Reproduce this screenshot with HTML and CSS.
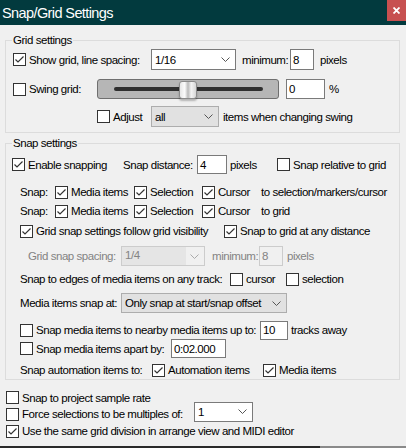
FILE: index.html
```html
<!DOCTYPE html>
<html lang="en">
<head>
    <meta charset="UTF-8">
    <title>Snap/Grid Settings</title>
    <link rel="stylesheet" href="styles.css">
</head>
<body>

<div class="titlebar">
    <div class="title">Snap/Grid Settings</div>
    <div class="close">
        <svg width="7" height="7" viewBox="0 0 7 7"><path d="M0.5 0.5 L6.5 6.5 M6.5 0.5 L0.5 6.5" stroke="#fff" stroke-width="1.8"/></svg>
    </div>
</div>

<div class="group grid-group">
    <div class="group-title">Grid settings</div>

    <div class="row row-show">
        <label class="cb w138"><span class="box"><svg width="11" height="11" viewBox="0 0 11 11"><polyline points="1.5,5.5 4,8 9.5,2.5" fill="none" stroke="#333" stroke-width="1.2"/></svg></span>Show grid, line spacing:</label>
        <div class="dd w85 h21"><span>1/16</span><svg width="9" height="5" viewBox="0 0 9 5"><polyline points="0.5,0.5 4.5,4.5 8.5,0.5" fill="none" stroke="#555"/></svg></div>
        <span class="txt ml6 w48">minimum:</span>
        <div class="edit w24 h21">8</div>
        <span class="txt ml6">pixels</span>
    </div>

    <div class="row row-swing">
        <label class="cb w84"><span class="box"></span>Swing grid:</label>
        <div class="slider">
            <div class="track"></div>
            <div class="thumb"></div>
        </div>
        <div class="edit ml7 w39 h20">0</div>
        <span class="txt ml4">%</span>
    </div>

    <div class="row row-adjust">
        <label class="cb w54"><span class="box"></span>Adjust</label>
        <div class="dd grey w68 h21"><span>all</span><svg width="9" height="5" viewBox="0 0 9 5"><polyline points="0.5,0.5 4.5,4.5 8.5,0.5" fill="none" stroke="#555"/></svg></div>
        <span class="txt ml4">items when changing swing</span>
    </div>
</div>

<div class="group snap-group">
    <div class="group-title">Snap settings</div>

    <div class="row row-enable">
        <label class="cb w111"><span class="box"><svg width="11" height="11" viewBox="0 0 11 11"><polyline points="1.5,5.5 4,8 9.5,2.5" fill="none" stroke="#333" stroke-width="1.2"/></svg></span>Enable snapping</label>
        <span class="txt w74">Snap distance:</span>
        <div class="edit w30 h19">4</div>
        <span class="txt ml3 w47">pixels</span>
        <label class="cb"><span class="box"></span>Snap relative to grid</label>
    </div>

    <div class="row row-snap1">
        <span class="txt w35">Snap:</span>
        <label class="cb w79"><span class="box"><svg width="11" height="11" viewBox="0 0 11 11"><polyline points="1.5,5.5 4,8 9.5,2.5" fill="none" stroke="#333" stroke-width="1.2"/></svg></span>Media items</label>
        <label class="cb w68"><span class="box"><svg width="11" height="11" viewBox="0 0 11 11"><polyline points="1.5,5.5 4,8 9.5,2.5" fill="none" stroke="#333" stroke-width="1.2"/></svg></span>Selection</label>
        <label class="cb w59"><span class="box"><svg width="11" height="11" viewBox="0 0 11 11"><polyline points="1.5,5.5 4,8 9.5,2.5" fill="none" stroke="#333" stroke-width="1.2"/></svg></span>Cursor</label>
        <span class="txt">to selection/markers/cursor</span>
    </div>

    <div class="row row-snap2">
        <span class="txt w35">Snap:</span>
        <label class="cb w79"><span class="box"><svg width="11" height="11" viewBox="0 0 11 11"><polyline points="1.5,5.5 4,8 9.5,2.5" fill="none" stroke="#333" stroke-width="1.2"/></svg></span>Media items</label>
        <label class="cb w68"><span class="box"><svg width="11" height="11" viewBox="0 0 11 11"><polyline points="1.5,5.5 4,8 9.5,2.5" fill="none" stroke="#333" stroke-width="1.2"/></svg></span>Selection</label>
        <label class="cb w59"><span class="box"><svg width="11" height="11" viewBox="0 0 11 11"><polyline points="1.5,5.5 4,8 9.5,2.5" fill="none" stroke="#333" stroke-width="1.2"/></svg></span>Cursor</label>
        <span class="txt">to grid</span>
    </div>

    <div class="row row-follow">
        <label class="cb w204"><span class="box"><svg width="11" height="11" viewBox="0 0 11 11"><polyline points="1.5,5.5 4,8 9.5,2.5" fill="none" stroke="#333" stroke-width="1.2"/></svg></span>Grid snap settings follow grid visibility</label>
        <label class="cb"><span class="box"><svg width="11" height="11" viewBox="0 0 11 11"><polyline points="1.5,5.5 4,8 9.5,2.5" fill="none" stroke="#333" stroke-width="1.2"/></svg></span>Snap to grid at any distance</label>
    </div>

    <div class="row row-spacing disabled">
        <span class="txt w93">Grid snap spacing:</span>
        <div class="dd off w84 h20"><span class="val">1/4</span><svg width="9" height="5" viewBox="0 0 9 5"><polyline points="0.5,0.5 4.5,4.5 8.5,0.5" fill="none" stroke="#aaa"/></svg></div>
        <span class="txt ml7 w47">minimum:</span>
        <div class="edit off w24 h20">8</div>
        <span class="txt ml4">pixels</span>
    </div>

    <div class="row row-edges">
        <span class="txt w210">Snap to edges of media items on any track:</span>
        <label class="cb w56"><span class="box"></span>cursor</label>
        <label class="cb"><span class="box"></span>selection</label>
    </div>

    <div class="row row-snapat">
        <span class="txt w101">Media items snap at:</span>
        <div class="dd grey w166 h20"><span>Only snap at start/snap offset</span><svg width="9" height="5" viewBox="0 0 9 5"><polyline points="0.5,0.5 4.5,4.5 8.5,0.5" fill="none" stroke="#555"/></svg></div>
    </div>

    <div class="row row-nearby">
        <label class="cb w240"><span class="box"></span>Snap media items to nearby media items up to:</label>
        <div class="edit w28 h19">10</div>
        <span class="txt ml3">tracks away</span>
    </div>

    <div class="row row-apart">
        <label class="cb w151"><span class="box"></span>Snap media items apart by:</label>
        <div class="edit w55 h19">0:02.000</div>
    </div>

    <div class="row row-auto">
        <span class="txt w132">Snap automation items to:</span>
        <label class="cb w111"><span class="box"><svg width="11" height="11" viewBox="0 0 11 11"><polyline points="1.5,5.5 4,8 9.5,2.5" fill="none" stroke="#333" stroke-width="1.2"/></svg></span>Automation items</label>
        <label class="cb"><span class="box"><svg width="11" height="11" viewBox="0 0 11 11"><polyline points="1.5,5.5 4,8 9.5,2.5" fill="none" stroke="#333" stroke-width="1.2"/></svg></span>Media items</label>
    </div>
</div>

<div class="row row-rate">
    <label class="cb"><span class="box"></span>Snap to project sample rate</label>
</div>

<div class="row row-force">
    <label class="cb w188"><span class="box"></span>Force selections to be multiples of:</label>
    <div class="dd w59 h20"><span>1</span><svg width="9" height="5" viewBox="0 0 9 5"><polyline points="0.5,0.5 4.5,4.5 8.5,0.5" fill="none" stroke="#555"/></svg></div>
</div>

<div class="row row-same">
    <label class="cb"><span class="box"><svg width="11" height="11" viewBox="0 0 11 11"><polyline points="1.5,5.5 4,8 9.5,2.5" fill="none" stroke="#333" stroke-width="1.2"/></svg></span>Use the same grid division in arrange view and MIDI editor</label>
</div>

<div class="frame-edge"></div>

</body>
</html>
```

FILE: styles.css
```css
* {
    box-sizing: border-box;
}
body {
    margin: 0;
    height: 448px;
    overflow: hidden;
    background: #f0f0f0;
    font-family: "Liberation Sans", Arial, sans-serif;
    font-size: 11.5px;
    letter-spacing: -0.45px;
    color: #000;
}

/* window caption */
.titlebar {
    height: 25px;
    background: #023a3e;
    display: flex;
    justify-content: space-between;
}
.title {
    color: #fff;
    font-size: 14.5px;
    letter-spacing: -0.6px;
    line-height: 16px;
    padding: 5px 0 0 2px;
}
.close {
    width: 19px;
    height: 21px;
    background: #c75050;
    display: flex;
    align-items: center;
    justify-content: center;
}
.close svg {
    display: block;
}

/* group boxes */
.group {
    width: 395px;
    margin-left: 5px;
    border: 1px solid #dcdcdc;
}
.grid-group {
    margin-top: 15px;
    padding-bottom: 5px;
}
.snap-group {
    margin-top: 10px;
}
.group-title {
    width: max-content;
    margin: -8px 0 0 6px;
    padding: 0 1px;
    line-height: 15px;
    background: #f0f0f0;
}

/* rows */
.row {
    display: flex;
    align-items: center;
    white-space: nowrap;
}
.row-show   { margin-top: 1px; height: 21px; padding-left: 7px; }
.row-swing  { margin-top: 9px; height: 20px; padding-left: 7px; }
.row-adjust { margin-top: 7px; height: 21px; padding-left: 91px; }

.row-enable { margin-top: 4px; height: 19px; padding-left: 6px; }
.row-snap1  { margin-top: 9px; height: 18px; padding-left: 14px; }
.row-snap2  { margin-top: 1px; height: 18px; padding-left: 14px; }
.row-follow { margin-top: 2px; height: 18px; padding-left: 14px; }
.row-spacing { margin-top: 6px; height: 20px; padding-left: 22px; }
.row-edges  { margin-top: 4px; height: 18px; padding-left: 14px; }
.row-snapat { margin-top: 5px; height: 20px; padding-left: 14px; }
.row-nearby { margin-top: 8px; height: 18px; padding-left: 14px; }
.row-apart  { height: 19px; padding-left: 14px; }
.row-auto   { margin-top: 3px; height: 18px; padding-left: 14px; }

.row-rate   { margin-top: 9px; height: 17px; padding-left: 6px; }
.row-force  { height: 16px; padding-left: 6px; }
.row-force .dd { margin-bottom: 5px; }
.row-same   { height: 18px; padding-left: 6px; }

.frame-edge {
    margin-top: 6px;
    height: 2px;
    background: linear-gradient(to right, #2a2a2a 0, #2a2a2a 320px, #8a8a8a 320px);
}

/* checkbox */
.cb {
    display: flex;
    align-items: center;
    flex: none;
}
.box {
    width: 13px;
    height: 13px;
    border: 1px solid #333;
    background: #fff;
    margin-right: 3px;
    flex: none;
}
.box svg {
    display: block;
}
.txt {
    flex: none;
}
.disabled .txt {
    color: #838383;
}

/* combo boxes */
.dd {
    display: flex;
    align-items: center;
    justify-content: space-between;
    flex: none;
    border: 1px solid #7a7a7a;
    background: #fff;
    padding: 0 5px 0 3px;
}
.dd svg {
    display: block;
    flex: none;
}
.dd.grey {
    background: #e1e1e1;
    border-color: #adadad;
}
.dd.off {
    background: #f0f0f0;
    border-color: #cccccc;
    color: #838383;
    padding-left: 0;
}
.dd.off .val {
    align-self: stretch;
    width: 64px;
    padding: 2px 0 0 3px;
    background: #e5e5e5;
}

/* edit fields */
.edit {
    display: flex;
    align-items: center;
    flex: none;
    border: 1px solid #7a7a7a;
    background: #fff;
    padding-left: 2px;
}
.edit.off {
    border-color: #cccccc;
    background: #f0f0f0;
    color: #838383;
}

/* swing slider */
.slider {
    position: relative;
    flex: none;
    width: 182px;
    height: 20px;
    border: 1px solid #6f6f6f;
    border-radius: 3px;
    background: #b6b6b6;
    display: flex;
    align-items: center;
    padding: 0 15px 0 16px;
}
.track {
    flex: 1;
    height: 4px;
    border-radius: 2px;
    background: #2f2f2f;
}
.thumb {
    position: absolute;
    left: 81px;
    top: 1px;
    width: 18px;
    height: 18px;
    border: 1px solid #8a8a8a;
    border-radius: 3px;
    background: linear-gradient(to right, #e6e6e6, #fbfbfb 30%, #b9b9b9 50%, #f3f3f3 70%, #d6d6d6);
    box-shadow: 0 2px 2px rgba(0, 0, 0, 0.25);
}

/* widths and gaps */
.ml3 { margin-left: 3px; }
.ml4 { margin-left: 4px; }
.ml6 { margin-left: 6px; }
.ml7 { margin-left: 7px; }
.h19 { height: 19px; }
.h20 { height: 20px; }
.h21 { height: 21px; }
.w24 { width: 24px; }
.w28 { width: 28px; }
.w30 { width: 30px; }
.w35 { width: 35px; }
.w39 { width: 39px; }
.w47 { width: 47px; }
.w48 { width: 48px; }
.w54 { width: 54px; }
.w55 { width: 55px; }
.w56 { width: 56px; }
.w59 { width: 59px; }
.w68 { width: 68px; }
.w74 { width: 74px; }
.w79 { width: 79px; }
.w84 { width: 84px; }
.w85 { width: 85px; }
.w93 { width: 93px; }
.w101 { width: 101px; }
.w111 { width: 111px; }
.w132 { width: 132px; }
.w138 { width: 138px; }
.w151 { width: 151px; }
.w166 { width: 166px; }
.w188 { width: 188px; }
.w204 { width: 204px; }
.w210 { width: 210px; }
.w240 { width: 240px; }
```
